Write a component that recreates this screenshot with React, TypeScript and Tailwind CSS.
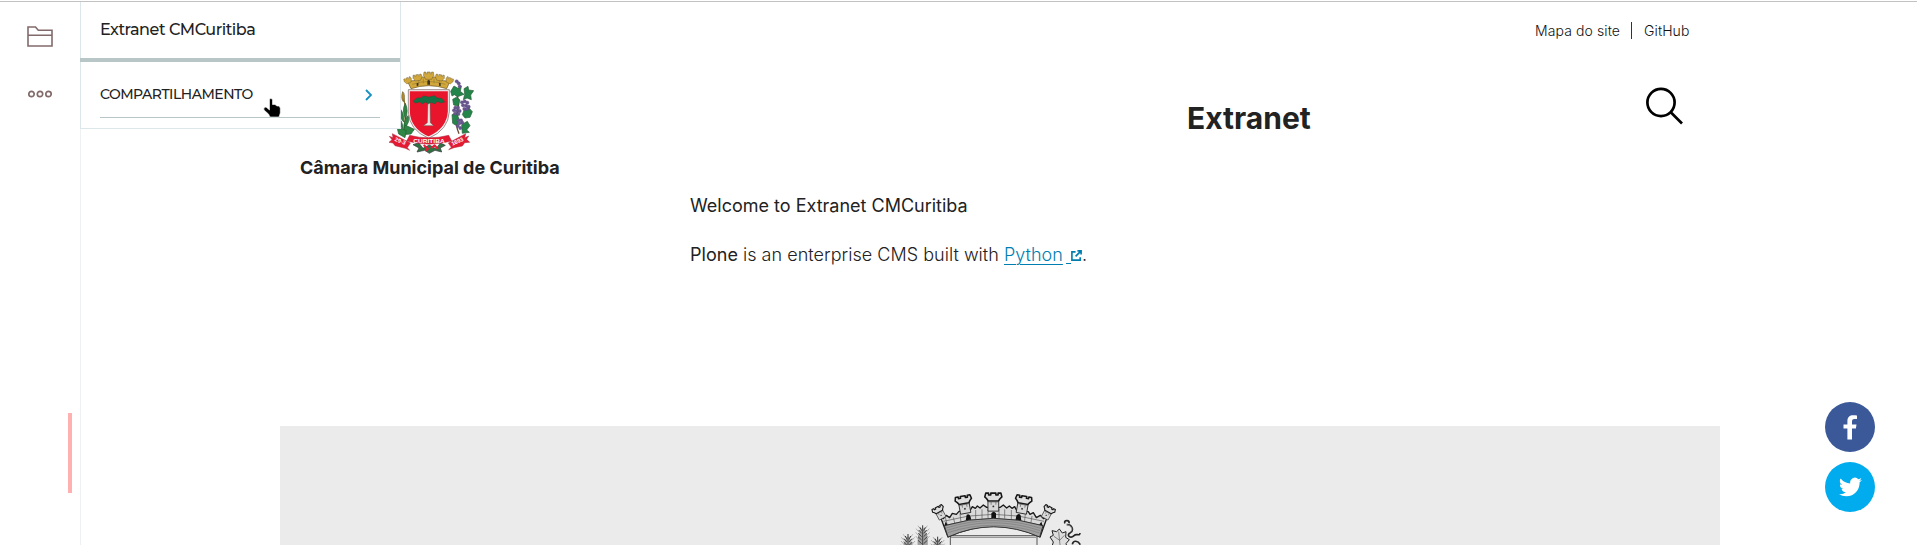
import React from "react";

const battlement = "M-27 -13 L-24 -25 H-15 V-19 H-8 V-25 H8 V-19 H15 V-25 H24 L27 -13 L21 -7 L16 0 H-16 L-21 -7 Z";

function CityCrest() {
  return (
    <svg viewBox="48 30 264 255" className="ml-[106px] block h-[85px] w-[88px] shrink-0" strokeLinejoin="round">
      {/* wheat */}
      <g stroke="#245c32" strokeWidth="2" fill="#2f8544">
        <path d="M101 112 Q112 160 100 216" fill="none" stroke="#80712e" strokeWidth="4" />
        <path d="M98 95 Q107 103 100 125 Q92 115 98 95Z" fill="#c2932d" stroke="#675221" />
        <path d="M106 130 Q116 151 107 177 Q94 151 106 130Z" />
        <path d="M88 143 Q104 160 101 186 Q84 166 88 143Z" />
        <path d="M115 166 Q122 185 103 205 Q98 185 115 166Z" />
        <path d="M79 170 Q98 178 99 206 Q80 192 79 170Z" />
        <path d="M105 195 L133 208 L123 222 L98 224Z" />
        <path d="M80 198 L109 212 L105 233 L86 222Z" />
      </g>
      {/* vine */}
      <path d="M250 82 Q272 115 263 154 T267 221" fill="none" stroke="#694832" strokeWidth="4" />
      <g fill="#24854a" stroke="#285c37" strokeWidth="2">
        <path d="M242 94 L252 78 L264 85 L274 79 L271 94 L282 103 L263 110 L253 104 L246 108Z" />
        <path d="M282 86 L294 79 L296 90 L311 92 L302 105 L304 119 L291 114 L280 119 L284 103Z" />
        <path d="M248 118 L259 112 L270 120 L265 138 L251 135Z" />
        <path d="M282 151 L297 144 L307 155 L300 172 L285 174 L277 164Z" />
        <path d="M246 164 L260 159 L267 177 L260 197 L248 190Z" />
        <path d="M275 194 L292 184 L300 197 L290 210 L298 217 L277 220Z" />
      </g>
      <g fill="#685791" stroke="#554474" strokeWidth="1">
        {[[260,64],[266,70],[269,79],[276,127],[284,124],[292,128],[279,136],[288,137],[296,140],[283,147],[291,147],[256,143],[264,143],[252,151],[261,153],[269,153],[255,161],[265,162],[265,181],[273,181],[268,190],[277,188],[263,198],[271,204]].map(([x, y]) => (
          <circle key={`${x}-${y}`} cx={x} cy={y} r="5" />
        ))}
      </g>
      {/* shield */}
      <path d="M117 91 H236 V155 Q233 207 176 232 Q119 207 117 155Z" fill="#e9152c" stroke="#f5eeee" strokeWidth="5" />
      <path d="M115 89 H238 V155 Q235 210 176 235 Q117 210 115 155Z" fill="none" stroke="#5b4745" strokeWidth="1.7" />
      <path d="M174 124 H180 L181 188 L191 197 H160 L172 188Z" fill="#f0e7e4" stroke="#5e5351" strokeWidth="1.5" />
      <path d="M129 124 L142 113 L154 114 L160 107 L176 111 L193 107 L202 114 L215 115 L224 126 L213 129 L202 124 L194 132 L183 127 L176 132 L166 126 L157 132 L149 125 L137 130Z" fill="#167244" stroke="#174d33" strokeWidth="1" />
      {/* crown */}
      <g transform="translate(0 -3)">
        <g fill="#d3a83a" stroke="#65532c" strokeWidth="2">
          <path d="M112 66 L132 65 L149 61 L158 54 L176 57 L194 54 L204 61 L221 65 L240 67 L230 89 Q176 71 123 89Z" />
          <path d={battlement} transform="translate(176 61) scale(.58 .88)" />
          <path d={battlement} transform="translate(144 65) rotate(-9) scale(.51 .73)" />
          <path d={battlement} transform="translate(208 65) rotate(9) scale(.51 .73)" />
          <path d={battlement} transform="translate(117 72) rotate(-23) scale(.43 .67)" />
          <path d={battlement} transform="translate(235 72) rotate(23) scale(.43 .67)" />
        </g>
        <path d="M127 76 Q176 59 226 76 M146 63 V77 M160 59 V73 M192 59 V73 M208 63 V77" fill="none" stroke="#967a30" strokeWidth="2" />
        <path d="M172 77 V65 Q176 61 180 65 V77 M140 81 V72 H145 V80 M207 80 V72 H212 V81" fill="#3d3421" />
      </g>
      {/* ribbon */}
      <path d="M129 254 L146 248 L159 265 L178 255 L198 266 L211 249 L226 256 L211 264 L215 276 L195 271 L178 280 L164 271 L141 276 L147 264Z" fill="#2f7242" stroke="#36323c" strokeWidth="2" />
      <path d="M161 255 L174 266 L166 272 M183 265 L194 256 L204 267" fill="none" stroke="#e21d35" strokeWidth="6" />
      <g fill="#e51932" stroke="#a5283a" strokeWidth="1.5">
        <path d="M58 229 L69 233 L67 221 L121 249 L112 263 L119 271 L106 265 L75 257 L69 249 L57 247 L66 239Z" />
        <path d="M296 228 L284 233 L287 221 L235 249 L244 262 L236 269 L252 263 L277 258 L284 248 L299 247 L290 238Z" />
        <path d="M119 226 Q176 241 236 226 L245 243 Q177 262 110 243Z" />
      </g>
      <g fill="#fff" fontFamily="Liberation Sans, sans-serif" fontWeight="700" fontSize="17" textAnchor="middle">
        <text x="177" y="248" fontSize="18" textLength="94" lengthAdjust="spacingAndGlyphs">CURITIBA</text>
        <text x="91" y="249" transform="rotate(22 91 243)">29-3</text>
        <text x="262" y="250" transform="rotate(-24 262 244)">1693</text>
      </g>
    </svg>
  );
}

function Tower({ x, y, angle, scale }: { x: number; y: number; angle: number; scale: number }) {
  return (
    <g transform={`translate(${x} ${y}) rotate(${angle}) scale(${scale})`}>
      <path d="M-17 -4 H17 V32 H-17Z" fill="#d8d8d8" stroke="#303030" strokeWidth="3" />
      <path d={battlement} fill="#dedede" stroke="#171717" strokeWidth="5" />
      <path d="M-17 3 H17 M-7 3 V12 M8 3 V12" stroke="#555" strokeWidth="2" />
      <circle cx="0" cy="17" r="3" fill="#333" />
    </g>
  );
}

function EngravedCrest() {
  return (
    <svg viewBox="60 180 549 165" className="block h-[55px] w-[183px]" fill="none" strokeLinejoin="round">
      <path d="M211 317 H471 V350 H211Z" fill="#e9e9e9" stroke="#555" strokeWidth="3" />
      <path d="M213 322 H469" stroke="#999" strokeWidth="4" />
      <path d="M180 257 L190 266 L199 256 L209 263 L217 250 L229 253 L237 244 L271 240 L277 230 L286 235 L292 228 L300 234 L310 225 L320 232 H361 L370 225 L380 234 L388 228 L396 235 L404 230 L410 241 L445 245 L450 253 L460 248 L469 263 L481 256 L491 266 L503 257 L480 321 Q340 255 204 321Z" fill="#dadada" stroke="#1b1b1b" strokeWidth="4" />
      <path d="M190 274 Q340 232 492 274 M192 287 Q340 245 486 287 M196 262 L205 299 M220 262 L226 287 M240 251 L243 277 M287 240 V267 M306 238 V266 M324 235 V265 M357 235 V265 M374 238 V266 M394 240 V268 M436 252 L433 280 M456 258 L451 289" stroke="#555" strokeWidth="2" />
      <Tower x={340} y={213} angle={0} scale={0.95} />
      <Tower x={252} y={221} angle={-10} scale={0.92} />
      <Tower x={429} y={221} angle={10} scale={0.92} />
      <Tower x={178} y={246} angle={-28} scale={0.67} />
      <Tower x={504} y={246} angle={28} scale={0.67} />
      <path d="M334 266 V250 Q341 240 348 250 V266Z M257 273 L260 254 Q269 249 272 261 L274 272Z M406 272 L409 257 Q416 247 422 256 L424 273Z M192 290 L197 275 L203 285 L204 302Z M489 290 L484 275 L477 285 L475 304Z" fill="#101010" />
      <path d="M193 287 Q340 243 489 287 L479 321 Q340 260 204 321Z" fill="#a0a0a0" stroke="#353535" strokeWidth="3" />
      <path d="M198 294 Q340 249 482 295 M201 301 Q340 255 480 302 M203 308 Q340 263 479 309" stroke="#707070" strokeWidth="1.5" />
      {/* wheat ears */}
      {[[128, 292], [84, 318], [173, 326]].map(([x, y]) => (
        <g key={x} transform={`translate(${x} ${y})`} stroke="#333" strokeWidth="3">
          <path d="M0 -6 V60 M-8 0 L-3 10 M8 0 L3 10 M-12 8 L-3 18 M12 8 L3 18 M-13 18 L-3 28 M13 18 L3 28 M-14 28 L-3 38 M14 28 L3 38 M-14 39 L-3 49 M14 39 L3 49" />
          <path d="M-7 5 L-14 -5 M7 5 L14 -5 M-11 14 L-20 4 M11 14 L20 4 M-12 25 L-21 15 M12 25 L21 15 M-12 36 L-21 26 M12 36 L21 26" strokeWidth="1" />
          <path d="M0 0 Q-18 17 -15 58 H15 Q18 17 0 0Z" fill="#555" fillOpacity=".5" stroke="none" />
        </g>
      ))}
      {/* vine leaf */}
      <path d="M510 321 L520 316 L516 302 L530 305 L538 297 L547 309 L558 305 L557 322 L568 329 L558 341 L562 353 H515 L520 336Z" fill="#dedede" stroke="#202020" strokeWidth="3" />
      <path d="M536 305 L540 345 M522 319 L539 331 L553 316" stroke="#555" strokeWidth="2" />
      <path d="M555 280 C549 268 573 270 566 280 M560 284 C574 283 584 299 571 308 C557 315 571 327 582 317 C589 308 599 321 600 309 M577 343 C580 329 594 332 601 344" stroke="#252525" strokeWidth="5" />
      <path d="M559 284 C574 286 581 297 570 307" stroke="#ddd" strokeWidth="1.5" />
    </svg>
  );
}

function Toolbar() {
  return (
    <aside className="flex w-[81px] shrink-0 justify-between border-r border-[#edf1f2]">
      <div className="flex w-[80px] flex-col items-center pt-[24px]">
        <svg viewBox="0 0 26 21" className="h-[21px] w-[26px]" fill="none" stroke="#826a6a" strokeWidth="1.6">
          <path d="M1 1 H8.5 L11.3 4.2 H25 V20 H1Z M1 9.2 H25" />
        </svg>
        <svg viewBox="0 0 24 8" className="mt-[43px] h-[8px] w-[24px]" fill="none" stroke="#826a6a" strokeWidth="1.7">
          <circle cx="3.5" cy="4" r="2.7" /><circle cx="12" cy="4" r="2.7" /><circle cx="20.5" cy="4" r="2.7" />
        </svg>
      </div>
      <div className="mt-[411px] mr-[8px] -ml-[12px] h-[80px] w-[4px] shrink-0 bg-[#ffb1b1]" />
    </aside>
  );
}

function FolderMenu() {
  return (
    <div className="absolute top-[2px] left-[80px] h-[127px] w-[321px] border-r border-b border-l border-[#dbe7ea] bg-white font-['Metropolis','Montserrat','Lato',sans-serif] text-[#222]">
      <div className="-mx-px flex h-[60px] w-[320px] items-start border-b-4 border-[#b8c6c8] pt-[16px] pl-[20px]">
        <span className="text-[16px] leading-[24px] font-medium tracking-[-0.46px]">Extranet CMCuritiba</span>
      </div>
      <div className="mr-[20px] ml-[19px] flex h-[56px] items-center justify-between border-b border-[#b8c6c8] pr-[8px]">
        <span className="pt-[8px] text-[14px] leading-[20px] font-medium tracking-[-0.5px]">COMPARTILHAMENTO</span>
        <svg viewBox="0 0 7 12" className="mt-[10px] h-[12px] w-[7px]" fill="none" stroke="#168fc3" strokeWidth="1.8"><path d="M1 1 L6 6 L1 11" /></svg>
      </div>
      <svg viewBox="0 0 18 20" className="absolute top-[96px] left-[182px] h-[20px] w-[18px]">
        <path d="M6.5 1 Q8 -.2 9.5 1.5 V6.5 L12 6.5 L14 8 L16 8 L17.3 10 V15 L16 19 H7 L5.5 16 L1 12 Q0 9 3 9 L6.5 12Z" fill="#000" stroke="#fff" strokeWidth=".6" />
      </svg>
    </div>
  );
}

export default function App() {
  return (
    <div className="relative flex h-[545px] w-full flex-col overflow-hidden bg-white font-['Inter',sans-serif] text-[#222]">
      <div className="mt-px h-px shrink-0 bg-[#c2c2c2]" />
      <div className="flex min-h-0 flex-1">
        <Toolbar />
        <main className="flex w-[1639px] shrink-0 flex-col pl-[199px]">
          <header className="flex h-[174px] shrink-0 items-start">
            <div className="flex w-[260px] flex-col items-start pt-[68px]">
              <CityCrest />
              <strong className="mt-px ml-[20px] whitespace-nowrap text-[18px] leading-[24px] font-bold">Câmara Municipal de Curitiba</strong>
            </div>
            <h1 className="mt-[98px] ml-[647px] w-[130px] text-[30px] leading-[36px] font-bold">Extranet</h1>
            <div className="ml-[218px] flex w-[162px] flex-col pt-[16px]">
              <nav className="flex h-[24px] items-center text-[14px] font-light tracking-[0.1px] text-[#111]">
                <a href="#" className="w-[96px] whitespace-nowrap">Mapa do site</a>
                <i className="h-[17px] w-px bg-[#333]" />
                <a href="#" className="ml-[12px]">GitHub</a>
              </nav>
              <svg viewBox="0 0 38 38" className="mt-[45px] ml-[110px] h-[38px] w-[38px]" fill="none" stroke="#000" strokeWidth="2.7">
                <circle cx="16" cy="15.5" r="13.6" /><path d="M25.5 25 L37 36.5" />
              </svg>
            </div>
          </header>
          <section className="h-[250px] pt-[18px] pl-[410px] text-[18px] leading-[24px]">
            <p>Welcome to Extranet CMCuritiba</p>
            <p className="mt-[25px] flex items-center font-light whitespace-pre">
              <span className="tracking-[0.025px]"><span className="font-normal">Plone</span> is an enterprise CMS built with <a href="#" className="text-[#007eb1] underline decoration-1 underline-offset-[3px]">Python</a></span>
              <span className="mt-[17px] ml-[3px] h-px w-[5px] bg-[#007eb1]" />
              <svg viewBox="0 0 12 12" className="h-[11px] w-[11px]" fill="none" stroke="#007eb1" strokeWidth="1.8"><path d="M5 2 H1 V11 H10 V8 M7 1 H11 V5 M11 1 L5 7" /></svg>.
            </p>
          </section>
          <div className="flex h-[119px] w-[1440px] bg-[#ebebeb] pt-[64px] pl-[620px]"><EngravedCrest /></div>
        </main>
        <div className="flex flex-1 flex-col gap-[10px] pt-[400px] pl-[105px]">
          <a href="#" aria-label="Facebook" className="flex h-[50px] w-[50px] items-center justify-center rounded-full bg-[#3b5998]">
            <svg viewBox="0 0 14 25" className="h-[25px] w-[14px]" fill="#fff"><path d="M14 .4V4h-2.500C9.300 4 9 5.200 9 6.700v2.700h4.500l-.600 4H9V24.600H4.400V13.400H.500v-4h3.900V6C4.400 2.200 6.700.200 10.200.200c1.700 0 3.100.100 3.800.200Z" /></svg>
          </a>
          <a href="#" aria-label="Twitter" className="flex h-[50px] w-[50px] items-center justify-center rounded-full bg-[#00aced]">
            <svg viewBox="0 0 24 24" className="h-[24px] w-[23px]" fill="#fff"><path d="M24 4.6a10 10 0 0 1-2.8.8 5 5 0 0 0 2.1-2.7c-1 .5-2 1-3.1 1.2a4.9 4.9 0 0 0-8.4 4.5A14 14 0 0 1 1.7 3.2 4.9 4.9 0 0 0 3.2 9.7A4.9 4.9 0 0 1 1 9.1a4.9 4.9 0 0 0 3.9 4.9 5 5 0 0 1-2.2.1 4.9 4.9 0 0 0 4.6 3.4A9.9 9.9 0 0 1 0 19.5a13.9 13.9 0 0 0 7.5 2.2c9.1 0 14-7.5 14-14v-.6A10 10 0 0 0 24 4.6Z" /></svg>
          </a>
        </div>
      </div>
      <FolderMenu />
    </div>
  );
}
